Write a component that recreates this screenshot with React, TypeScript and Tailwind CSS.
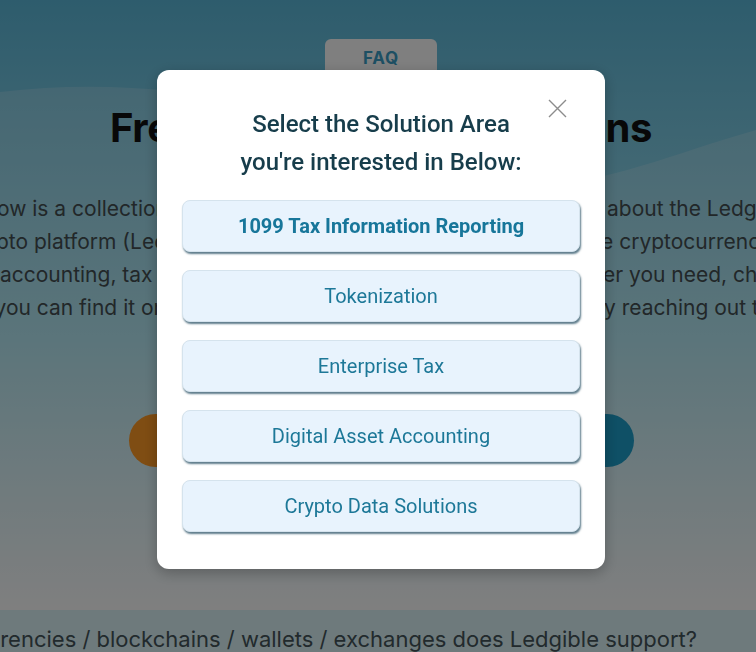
const solutions = [
  { label: "1099 Tax Information Reporting", active: true },
  { label: "Tokenization" },
  { label: "Enterprise Tax" },
  { label: "Digital Asset Accounting" },
  { label: "Crypto Data Solutions" },
];

// paragraph lines; only the ends peek out from behind the modal
const introLines = [
  { left: "Below is a collection", leftW: "w-[162px]", gap: "w-[439px]", right: "about the Ledgible" },
  { left: "Crypto platform (Led", leftW: "w-[161px]", gap: "w-[434px]", right: "e cryptocurrency" },
  { left: "accounting, tax &", leftW: "w-[166px]", gap: "w-[431px]", right: "er you need, chances" },
  { left: "you can find it on", leftW: "w-[160px]", gap: "w-[438px]", right: "y reaching out to" },
];

function CloseIcon() {
  return (
    <svg width="19" height="19" viewBox="0 0 19 19" fill="none">
      <path d="M1 1L18 18M18 1L1 18" stroke="#8c8c8c" strokeWidth="1.4" />
    </svg>
  );
}

export default function App() {
  return (
    <div className="relative h-[652px] w-full overflow-hidden bg-white font-['Inter',sans-serif]">
      {/* page behind the modal */}
      <section className="relative bg-gradient-to-b from-[#5cb9da] via-[#a6e6f4] via-55% to-white">
        <svg className="absolute inset-0 h-full w-full" viewBox="0 0 756 610" preserveAspectRatio="none">
          <path d="M0 92 C180 70 360 120 480 175 C560 205 650 160 756 130 L756 610 L0 610 Z" fill="white" fillOpacity="0.18" />
        </svg>
        <div className="relative flex flex-col items-center pl-[6px]">
          <div className="mt-[39px] flex h-[40px] w-[112px] items-center justify-center rounded-md bg-white text-[17px] font-bold tracking-wider text-[#3a9ec6]">
            FAQ
          </div>
          <h1 className="mt-[25px] whitespace-nowrap text-[40px] font-bold leading-[48px] tracking-[-0.01em] text-[#111]">
            Frequently Asked Questions
          </h1>
          <div className="mt-[40px] w-full text-[21px] leading-[33px] text-[#444f52]">
            {introLines.map((l) => (
              <div key={l.left} className="flex whitespace-nowrap">
                <div className={`flex shrink-0 justify-end ${l.leftW}`}>{l.left}</div>
                <div className={`shrink-0 ${l.gap}`} />
                <div>{l.right}</div>
              </div>
            ))}
          </div>
          <div className="mt-[90px] flex gap-[25px]">
            <button className="h-[53px] w-[240px] rounded-full bg-[#ff9a26] text-[18px] font-semibold text-white">Contact Us</button>
            <button className="h-[53px] w-[240px] rounded-full bg-[#1ea0cc] text-[18px] font-semibold text-white">Get Started</button>
          </div>
          <div className="h-[143px]" />
        </div>
      </section>
      <section className="bg-[#dcf4f8] pt-[13px]">
        <div className="flex justify-end whitespace-nowrap pr-[59px] text-[22px] leading-[33px] text-[#44545a]">
          Which cryptocurrencies / blockchains / wallets / exchanges does Ledgible support?
        </div>
      </section>

      {/* modal */}
      <div className="fixed inset-0 flex items-start justify-center bg-black/50 pl-[6px] pt-[70px] font-['Roboto',sans-serif]">
        <div className="relative w-[448px] rounded-xl bg-white px-[25px] pb-[37px] pt-[35px] shadow-[0_4px_14px_rgba(0,0,0,0.25)]">
          <button className="absolute right-[38px] top-[29px]">
            <CloseIcon />
          </button>
          <h2 className="text-center text-[24px] font-medium leading-[38px] text-[#173d4b]">
            Select the Solution Area
            <br />
            you're interested in Below:
          </h2>
          <div className="mt-[19px] flex flex-col gap-[18px]">
            {solutions.map((s) => (
              <button
                key={s.label}
                className={`h-[52px] w-full rounded-lg border border-[#d5e3ed] bg-[#e8f3fd] text-[20px] shadow-[1px_2px_2px_rgba(40,80,100,0.75)] ${
                  s.active ? "font-bold text-[#17769a]" : "font-normal text-[#1d7898]"
                }`}
              >
                {s.label}
              </button>
            ))}
          </div>
        </div>
      </div>
    </div>
  );
}
